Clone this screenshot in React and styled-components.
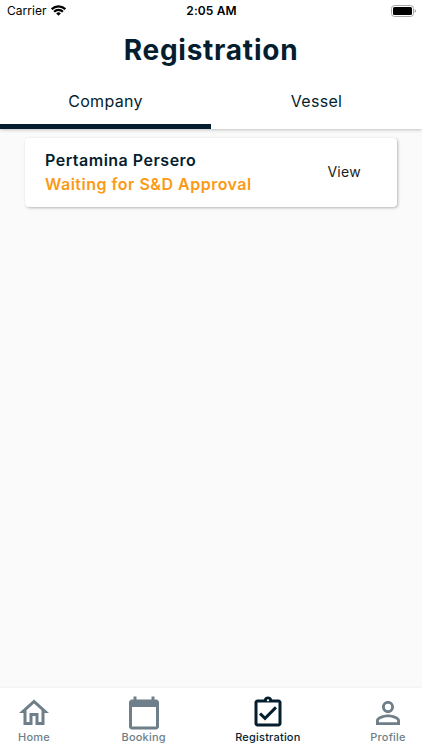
import React, { useState } from 'react';

import styled, { createGlobalStyle, ThemeProvider } from 'styled-components';

const theme = {
  colors: {
    primary: '#041e2f',
    muted: '#6e7f89',
    warning: '#fb9a14',
    background: '#fafafa',
  },
};

const GlobalStyle = createGlobalStyle`
  * {
    box-sizing: border-box;
  }

  body {
    margin: 0;
    font-family: Inter, "Liberation Sans", sans-serif;
  }
  `;

const Screen = styled.div`
  display: flex;
  flex-direction: column;
  height: 750px;
  overflow: hidden;
  color: ${(props) => props.theme.colors.primary};
  background: ${(props) => props.theme.colors.background};
  `;

const Header = styled.header`
  height: 129px;
  flex-shrink: 0;
  background: #fff;
  box-shadow: 0 0 4px rgba(0, 0, 0, 0.36);
  `;

const StatusBar = styled.div`
  display: grid;
  grid-template-columns: 1fr auto 1fr;
  align-items: center;
  height: 22px;
  padding: 0 6px 0 7px;
  color: #000;
  font-size: 12px;
  line-height: 22px;
  `;

const Carrier = styled.div`
  display: flex;
  align-items: center;
  gap: 4px;
  letter-spacing: 0.05px;

  svg {
    margin-bottom: 1px;
  }
  `;

const Time = styled.div`
  font-weight: 600;
  letter-spacing: 0.1px;
  `;

const Battery = styled.svg`
  display: block;
  justify-self: end;
  margin-bottom: 1px;
  `;

const Title = styled.h1`
  height: 56px;
  margin: 0;
  font-size: 28px;
  font-weight: 700;
  line-height: 56px;
  letter-spacing: 0.75px;
  text-align: center;
  `;

const Tabs = styled.div`
  display: flex;
  height: 51px;
  `;

const Tab = styled.button`
  flex: 1;
  padding: 0;
  border: 0;
  border-bottom: 5px solid ${(props) => (props.$active ? props.theme.colors.primary : 'transparent')};
  background: none;
  color: inherit;
  font: inherit;
  font-size: 16px;
  letter-spacing: 0.3px;
  `;

const Content = styled.main`
  flex: 1;
  padding: 9px 25px;
  `;

const Card = styled.div`
  display: flex;
  justify-content: space-between;
  align-items: center;
  height: 69px;
  padding: 0 36px 2px 20px;
  border-radius: 4px;
  background: #fff;
  box-shadow: 1px 1px 3px rgba(0, 0, 0, 0.28);
  `;

const CardText = styled.div`
  font-size: 16px;
  font-weight: 600;
  line-height: 24px;
  letter-spacing: 0.5px;
  `;

const Status = styled.div`
  color: ${(props) => props.theme.colors.warning};
  `;

const ViewButton = styled.button`
  padding: 0;
  border: 0;
  background: none;
  color: #1c1c1c;
  font: inherit;
  font-size: 14px;
  letter-spacing: 0.3px;
  `;

const BottomBar = styled.nav`
  display: flex;
  justify-content: space-between;
  height: 62px;
  padding: 6.5px 16px 0 16px;
  flex-shrink: 0;
  background: #fff;
  box-shadow: 0 -1px 2px rgba(0, 0, 0, 0.04);
  `;

const NavItem = styled.div`
  display: flex;
  flex-direction: column;
  align-items: center;
  color: ${(props) => (props.$active ? props.theme.colors.primary : props.theme.colors.muted)};
  font-size: 11px;
  font-weight: 500;
  line-height: 12px;
  letter-spacing: 0.2px;
  `;

const NavIcon = styled.svg`
  display: block;
  width: 36px;
  height: 36px;
  fill: currentColor;
  `;

const tabs = ['Company', 'Vessel'];

const navItems = [
  {
    label: 'Home',
    path: 'M12 5.69l5 4.5V18h-2v-6H9v6H7v-7.81l5-4.5M12 3L2 12h3v8h6v-6h2v6h6v-8h3L12 3z',
  },
  {
    label: 'Booking',
    path: 'M20 3h-1V1h-2v2H7V1H5v2H4c-1.1 0-2 .9-2 2v16c0 1.1.9 2 2 2h16c1.1 0 2-.9 2-2V5c0-1.1-.9-2-2-2zm0 18H4V8h16v13z',
  },
  {
    label: 'Registration',
    path: 'M19 3h-4.18C14.4 1.84 13.3 1 12 1s-2.4.84-2.82 2H5c-1.1 0-2 .9-2 2v14c0 1.1.9 2 2 2h14c1.1 0 2-.9 2-2V5c0-1.1-.9-2-2-2zm-7-.25c.41 0 .75.34.75.75s-.34.75-.75.75-.75-.34-.75-.75.34-.75.75-.75zM19 19H5V5h14v14zM17.99 9l-1.41-1.42-6.59 6.59-2.58-2.57-1.42 1.41 4 3.99z',
  },
  {
    label: 'Profile',
    path: 'M12 5.9a2.1 2.1 0 1 1 0 4.2 2.1 2.1 0 0 1 0-4.2m0 9c2.97 0 6.1 1.46 6.1 2.1v1.1H5.9V17c0-.64 3.13-2.1 6.1-2.1M12 4C9.79 4 8 5.79 8 8s1.79 4 4 4 4-1.79 4-4-1.79-4-4-4zm0 9c-2.67 0-8 1.34-8 4v3h16v-3c0-2.66-5.33-4-8-4z',
  },
];

function App() {
  const [activeTab, setActiveTab] = useState('Company');

  return (
    <ThemeProvider theme={theme}>
      <GlobalStyle />
      <Screen>
        <Header>
          <StatusBar>
            <Carrier>
              Carrier
              <svg width="15" height="11" viewBox="0 0 15 11" fill="none" stroke="#000" strokeWidth="2.2">
                <path d="M.7 4.2a9.6 9.6 0 0 1 13.6 0M3.1 6.7a6.2 6.2 0 0 1 8.8 0" />
                <path d="M7.5 10.8L5.2 8.5a3.25 3.25 0 0 1 4.6 0z" fill="#000" stroke="none" />
              </svg>
            </Carrier>
            <Time>2:05 AM</Time>
            <Battery width="25" height="12" viewBox="0 0 25 12">
              <rect x=".5" y=".5" width="22" height="11" rx="3" fill="#fff" stroke="#a6a6a6" />
              <rect x="2" y="2" width="19" height="8" rx="1.5" fill="#000" />
              <path d="M23.7 4.2v3.6c.7-.3 1.1-1 1.1-1.8s-.4-1.5-1.1-1.8z" fill="#888" />
            </Battery>
          </StatusBar>
          <Title>Registration</Title>
          <Tabs>
            {tabs.map((tab) => (
              <Tab key={tab} $active={tab === activeTab} onClick={() => setActiveTab(tab)}>
                {tab}
              </Tab>
            ))}
          </Tabs>
        </Header>
        <Content>
          <Card>
            <CardText>
              <div>Pertamina Persero</div>
              <Status>Waiting for S&amp;D Approval</Status>
            </CardText>
            <ViewButton>View</ViewButton>
          </Card>
        </Content>
        <BottomBar>
          {navItems.map(({ label, path }) => (
            <NavItem key={label} $active={label === 'Registration'}>
              <NavIcon viewBox="0 0 24 24">
                <path d={path} />
              </NavIcon>
              {label}
            </NavItem>
          ))}
        </BottomBar>
      </Screen>
    </ThemeProvider>
  );
}

export default App;
